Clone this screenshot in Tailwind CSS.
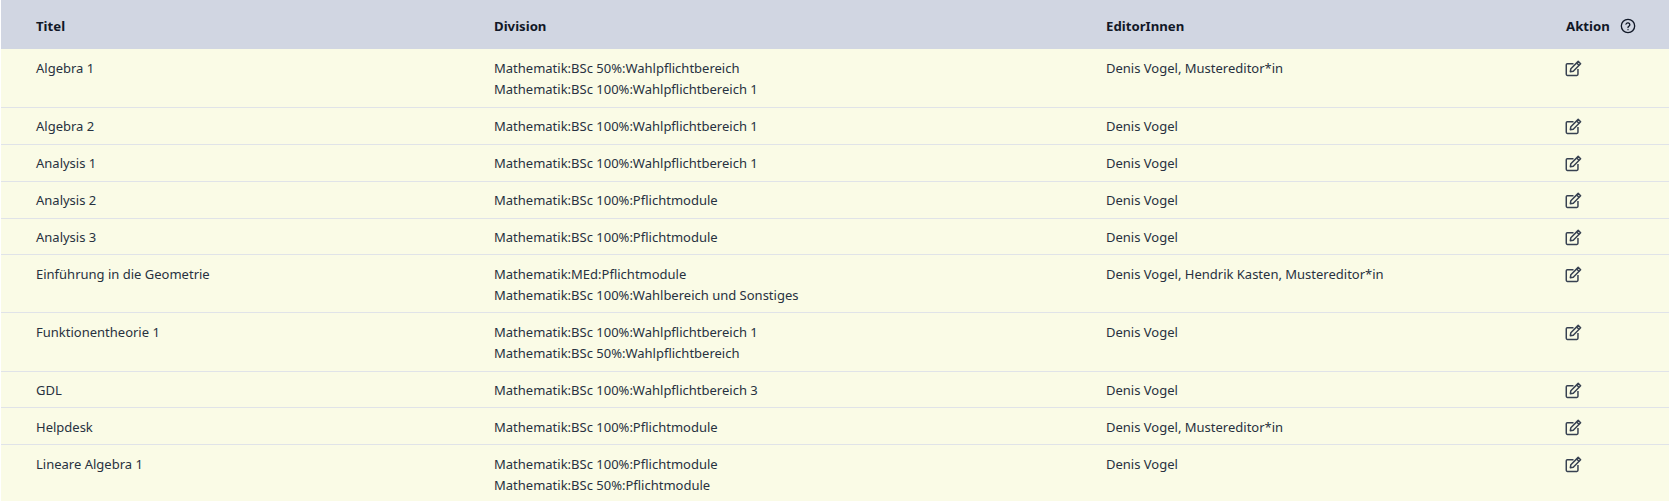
<!DOCTYPE html>
<html>

<head>
    <meta charset="UTF-8">
    <script src="https://cdn.jsdelivr.net/npm/@tailwindcss/browser@4"></script>
</head>

<body class="bg-white font-['Noto_Sans',sans-serif] text-[13px] leading-[21px] text-[#273140] overflow-hidden">
    <table class="ml-px w-[1668px] table-fixed border-collapse bg-[#fafbe6]">
        <colgroup>
            <col class="w-[493px]">
            <col class="w-[612px]">
            <col class="w-[460px]">
            <col>
        </colgroup>
        <thead class="bg-[#d1d6e2] text-left font-bold text-[13.2px] text-[#111827]">
            <tr class="h-[49px]">
                <th class="pl-[35px] pt-[3px]">Titel</th>
                <th class="pt-[3px]">Division</th>
                <th class="pt-[3px]">EditorInnen</th>
                <th class="pt-[3px]">
                    <div class="flex items-center gap-[10px]">
                        Aktion
                        <svg class="w-4 h-4" viewBox="0 0 24 24" fill="none" stroke="currentColor" stroke-width="2" stroke-linecap="round" stroke-linejoin="round">
                            <circle cx="12" cy="12" r="10" />
                            <path d="M9 9.2a3 3 0 0 1 5.8 1c0 2-2.8 2.4-2.8 4" />
                            <path d="M12 17.5h.01" />
                        </svg>
                    </div>
                </th>
            </tr>
        </thead>
        <tbody>
            <tr class="border-b border-[#e0e3e8] align-top">
                <td class="pl-[35px] pt-[9px] pb-[7px]">Algebra 1</td>
                <td class="pt-[9px] pb-[7px]">Mathematik:BSc 50%:Wahlpflichtbereich<br>Mathematik:BSc 100%:Wahlpflichtbereich 1</td>
                <td class="pt-[9px] pb-[7px]">Denis Vogel, Mustereditor*in</td>
                <td class="pt-[9px] pb-[7px]">
                    <svg class="w-[17px] h-[21px] -ml-px" viewBox="0 0 16 16" fill="none" stroke="#374151" stroke-width="1.4" stroke-linejoin="round">
                        <path d="M8 3.5H2.2a1 1 0 0 0-1 1v9a1 1 0 0 0 1 1h9a1 1 0 0 0 1-1V8.5" />
                        <path d="M5.5 8.2 12.4 1.3l2.3 2.3-6.9 6.9-2.8.5z" />
                        <path d="M11 2.8l2.3 2.3" />
                    </svg>
                </td>
            </tr>
            <tr class="border-b border-[#e0e3e8] align-top">
                <td class="pl-[35px] pt-2 pb-[7px]">Algebra 2</td>
                <td class="pt-2 pb-[7px]">Mathematik:BSc 100%:Wahlpflichtbereich 1</td>
                <td class="pt-2 pb-[7px]">Denis Vogel</td>
                <td class="pt-2 pb-[7px]">
                    <svg class="w-[17px] h-[21px] -ml-px" viewBox="0 0 16 16" fill="none" stroke="#374151" stroke-width="1.4" stroke-linejoin="round">
                        <path d="M8 3.5H2.2a1 1 0 0 0-1 1v9a1 1 0 0 0 1 1h9a1 1 0 0 0 1-1V8.5" />
                        <path d="M5.5 8.2 12.4 1.3l2.3 2.3-6.9 6.9-2.8.5z" />
                        <path d="M11 2.8l2.3 2.3" />
                    </svg>
                </td>
            </tr>
            <tr class="border-b border-[#e0e3e8] align-top">
                <td class="pl-[35px] pt-2 pb-[7px]">Analysis 1</td>
                <td class="pt-2 pb-[7px]">Mathematik:BSc 100%:Wahlpflichtbereich 1</td>
                <td class="pt-2 pb-[7px]">Denis Vogel</td>
                <td class="pt-2 pb-[7px]">
                    <svg class="w-[17px] h-[21px] -ml-px" viewBox="0 0 16 16" fill="none" stroke="#374151" stroke-width="1.4" stroke-linejoin="round">
                        <path d="M8 3.5H2.2a1 1 0 0 0-1 1v9a1 1 0 0 0 1 1h9a1 1 0 0 0 1-1V8.5" />
                        <path d="M5.5 8.2 12.4 1.3l2.3 2.3-6.9 6.9-2.8.5z" />
                        <path d="M11 2.8l2.3 2.3" />
                    </svg>
                </td>
            </tr>
            <tr class="border-b border-[#e0e3e8] align-top">
                <td class="pl-[35px] pt-2 pb-[7px]">Analysis 2</td>
                <td class="pt-2 pb-[7px]">Mathematik:BSc 100%:Pflichtmodule</td>
                <td class="pt-2 pb-[7px]">Denis Vogel</td>
                <td class="pt-2 pb-[7px]">
                    <svg class="w-[17px] h-[21px] -ml-px" viewBox="0 0 16 16" fill="none" stroke="#374151" stroke-width="1.4" stroke-linejoin="round">
                        <path d="M8 3.5H2.2a1 1 0 0 0-1 1v9a1 1 0 0 0 1 1h9a1 1 0 0 0 1-1V8.5" />
                        <path d="M5.5 8.2 12.4 1.3l2.3 2.3-6.9 6.9-2.8.5z" />
                        <path d="M11 2.8l2.3 2.3" />
                    </svg>
                </td>
            </tr>
            <tr class="border-b border-[#e0e3e8] align-top">
                <td class="pl-[35px] pt-2 pb-[6px]">Analysis 3</td>
                <td class="pt-2 pb-[6px]">Mathematik:BSc 100%:Pflichtmodule</td>
                <td class="pt-2 pb-[6px]">Denis Vogel</td>
                <td class="pt-2 pb-[6px]">
                    <svg class="w-[17px] h-[21px] -ml-px" viewBox="0 0 16 16" fill="none" stroke="#374151" stroke-width="1.4" stroke-linejoin="round">
                        <path d="M8 3.5H2.2a1 1 0 0 0-1 1v9a1 1 0 0 0 1 1h9a1 1 0 0 0 1-1V8.5" />
                        <path d="M5.5 8.2 12.4 1.3l2.3 2.3-6.9 6.9-2.8.5z" />
                        <path d="M11 2.8l2.3 2.3" />
                    </svg>
                </td>
            </tr>
            <tr class="border-b border-[#e0e3e8] align-top">
                <td class="pl-[35px] pt-[9px] pb-[6px]">Einführung in die Geometrie</td>
                <td class="pt-[9px] pb-[6px]">Mathematik:MEd:Pflichtmodule<br>Mathematik:BSc 100%:Wahlbereich und Sonstiges</td>
                <td class="pt-[9px] pb-[6px]">Denis Vogel, Hendrik Kasten, Mustereditor*in</td>
                <td class="pt-[9px] pb-[6px]">
                    <svg class="w-[17px] h-[21px] -ml-px" viewBox="0 0 16 16" fill="none" stroke="#374151" stroke-width="1.4" stroke-linejoin="round">
                        <path d="M8 3.5H2.2a1 1 0 0 0-1 1v9a1 1 0 0 0 1 1h9a1 1 0 0 0 1-1V8.5" />
                        <path d="M5.5 8.2 12.4 1.3l2.3 2.3-6.9 6.9-2.8.5z" />
                        <path d="M11 2.8l2.3 2.3" />
                    </svg>
                </td>
            </tr>
            <tr class="border-b border-[#e0e3e8] align-top">
                <td class="pl-[35px] pt-[9px] pb-[7px]">Funktionentheorie 1</td>
                <td class="pt-[9px] pb-[7px]">Mathematik:BSc 100%:Wahlpflichtbereich 1<br>Mathematik:BSc 50%:Wahlpflichtbereich</td>
                <td class="pt-[9px] pb-[7px]">Denis Vogel</td>
                <td class="pt-[9px] pb-[7px]">
                    <svg class="w-[17px] h-[21px] -ml-px" viewBox="0 0 16 16" fill="none" stroke="#374151" stroke-width="1.4" stroke-linejoin="round">
                        <path d="M8 3.5H2.2a1 1 0 0 0-1 1v9a1 1 0 0 0 1 1h9a1 1 0 0 0 1-1V8.5" />
                        <path d="M5.5 8.2 12.4 1.3l2.3 2.3-6.9 6.9-2.8.5z" />
                        <path d="M11 2.8l2.3 2.3" />
                    </svg>
                </td>
            </tr>
            <tr class="border-b border-[#e0e3e8] align-top">
                <td class="pl-[35px] pt-2 pb-[6px]">GDL</td>
                <td class="pt-2 pb-[6px]">Mathematik:BSc 100%:Wahlpflichtbereich 3</td>
                <td class="pt-2 pb-[6px]">Denis Vogel</td>
                <td class="pt-2 pb-[6px]">
                    <svg class="w-[17px] h-[21px] -ml-px" viewBox="0 0 16 16" fill="none" stroke="#374151" stroke-width="1.4" stroke-linejoin="round">
                        <path d="M8 3.5H2.2a1 1 0 0 0-1 1v9a1 1 0 0 0 1 1h9a1 1 0 0 0 1-1V8.5" />
                        <path d="M5.5 8.2 12.4 1.3l2.3 2.3-6.9 6.9-2.8.5z" />
                        <path d="M11 2.8l2.3 2.3" />
                    </svg>
                </td>
            </tr>
            <tr class="border-b border-[#e0e3e8] align-top">
                <td class="pl-[35px] pt-[9px] pb-[6px]">Helpdesk</td>
                <td class="pt-[9px] pb-[6px]">Mathematik:BSc 100%:Pflichtmodule</td>
                <td class="pt-[9px] pb-[6px]">Denis Vogel, Mustereditor*in</td>
                <td class="pt-[9px] pb-[6px]">
                    <svg class="w-[17px] h-[21px] -ml-px" viewBox="0 0 16 16" fill="none" stroke="#374151" stroke-width="1.4" stroke-linejoin="round">
                        <path d="M8 3.5H2.2a1 1 0 0 0-1 1v9a1 1 0 0 0 1 1h9a1 1 0 0 0 1-1V8.5" />
                        <path d="M5.5 8.2 12.4 1.3l2.3 2.3-6.9 6.9-2.8.5z" />
                        <path d="M11 2.8l2.3 2.3" />
                    </svg>
                </td>
            </tr>
            <tr class="align-top">
                <td class="pl-[35px] pt-[9px] pb-[6px]">Lineare Algebra 1</td>
                <td class="pt-[9px] pb-[6px]">Mathematik:BSc 100%:Pflichtmodule<br>Mathematik:BSc 50%:Pflichtmodule</td>
                <td class="pt-[9px] pb-[6px]">Denis Vogel</td>
                <td class="pt-[9px] pb-[6px]">
                    <svg class="w-[17px] h-[21px] -ml-px" viewBox="0 0 16 16" fill="none" stroke="#374151" stroke-width="1.4" stroke-linejoin="round">
                        <path d="M8 3.5H2.2a1 1 0 0 0-1 1v9a1 1 0 0 0 1 1h9a1 1 0 0 0 1-1V8.5" />
                        <path d="M5.5 8.2 12.4 1.3l2.3 2.3-6.9 6.9-2.8.5z" />
                        <path d="M11 2.8l2.3 2.3" />
                    </svg>
                </td>
            </tr>
        </tbody>
    </table>
</body>

</html>
